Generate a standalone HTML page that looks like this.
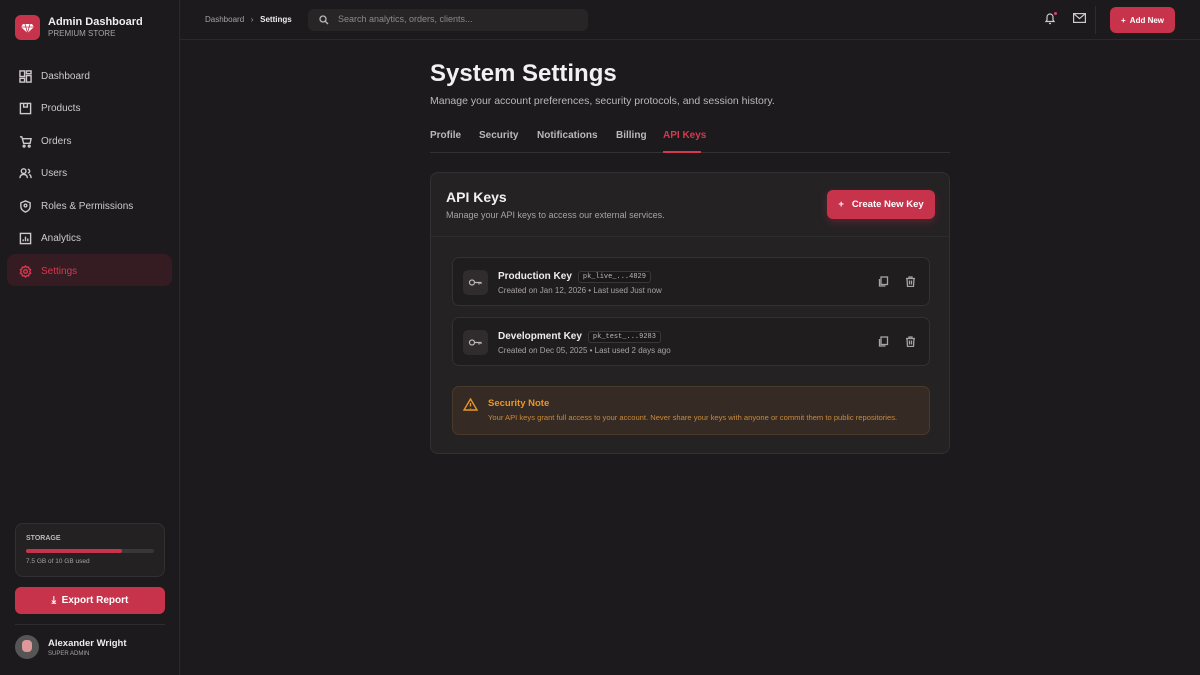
<!DOCTYPE html>
<html><head><meta charset="utf-8"><style>
*{box-sizing:border-box;margin:0;padding:0}
body{width:1200px;height:675px;background:#1c1a1c;font-family:"Liberation Sans",sans-serif;color:#e8e4e6;position:relative;overflow:hidden}
.sb{position:absolute;left:0;top:0;width:180px;height:675px;border-right:1px solid #2c292b;background:#1c1a1c}
.logo{position:absolute;left:15px;top:15px;width:25px;height:25px;border-radius:6px;background:#c8334c}
.nav{position:absolute;left:7px;width:165px;height:32px;display:flex;align-items:center;padding-left:12px;padding-top:2px;font-size:10px;color:#cfc9cc;border-radius:8px}
.nav svg{width:13px;height:13px;margin-right:9px;stroke:#cfc9cc;fill:none;stroke-width:1.5}
.nav.act{background:#351c23;color:#d7384f}
.nav.act svg{stroke:#d7384f}
.top{position:absolute;left:180px;top:0;right:0;height:40px;border-bottom:1px solid #2c292b}
.btn{background:#c8334c;color:#fff;border-radius:6px;font-weight:bold;display:flex;align-items:center;justify-content:center}
.tabs span{position:absolute;top:130px;font-size:10px;font-weight:bold;color:#bdb7ba}
.card{position:absolute;left:430px;top:172px;width:520px;height:282px;background:#252224;border:1px solid #333032;border-radius:8px}
.key{position:absolute;left:21px;width:478px;height:49px;border:1px solid #343133;border-radius:7px;background:#201d1f}
.ki{position:absolute;left:10px;top:12px;width:25px;height:25px;background:#302c2e;border-radius:5px}
.kn{position:absolute;left:45px;top:13px;font-size:10px;font-weight:bold;color:#f0ecee}
.code{display:inline-block;margin-left:6px;font-family:"Liberation Mono",monospace;font-size:7px;font-weight:normal;color:#bdb7ba;border:1px solid #3a3739;background:#1a1819;padding:1px 4px;border-radius:3px;vertical-align:1px}
.kd{position:absolute;left:45px;top:28px;font-size:8px;color:#a8a2a5}
.ic{position:absolute;top:18px;width:11px;height:11px;stroke:#a8a2a5;fill:none;stroke-width:1.3}
</style></head><body>
<div class="sb">
<div class="logo"><svg width="25" height="25" viewBox="0 0 25 25"><path d="M8 9h9l2 3-6.5 6L6 12z" fill="#fff"/><path d="M6 12h13M10 9l2.5 9M15 9l-2.5 9" stroke="#c8334c" stroke-width=".8"/></svg></div>
<div style="position:absolute;left:48px;top:16px;font-size:11px;font-weight:bold;color:#f2eef0">Admin Dashboard</div>
<div style="position:absolute;left:48px;top:29px;font-size:8px;color:#a8a2a5">PREMIUM STORE</div>
<div class="nav" style="top:59px"><svg viewBox="0 0 14 14"><rect x="1" y="1" width="5" height="6"/><rect x="8" y="1" width="5" height="3"/><rect x="1" y="9" width="5" height="4"/><rect x="8" y="6" width="5" height="7"/></svg>Dashboard</div>
<div class="nav" style="top:91px"><svg viewBox="0 0 14 14"><rect x="1.5" y="1.5" width="11" height="11"/><path d="M5 1.5v4h4v-4"/></svg>Products</div>
<div class="nav" style="top:124px"><svg viewBox="0 0 14 14"><path d="M1 2h2l2 7h7l1-5H4"/><circle cx="5.5" cy="12" r="1"/><circle cx="11" cy="12" r="1"/></svg>Orders</div>
<div class="nav" style="top:156px"><svg viewBox="0 0 14 14"><circle cx="5" cy="4.5" r="2.5"/><path d="M1 12c0-3 2-4 4-4s4 1 4 4M9.5 2.5a2 2 0 010 4M11 8c1.5.5 2 2 2 4"/></svg>Users</div>
<div class="nav" style="top:189px"><svg viewBox="0 0 14 14"><path d="M7 1l5 2v4c0 3-2.5 5-5 6-2.5-1-5-3-5-6V3z"/><circle cx="7" cy="6" r="1.5"/></svg>Roles &amp; Permissions</div>
<div class="nav" style="top:221px"><svg viewBox="0 0 14 14"><rect x="1.5" y="1.5" width="11" height="11"/><path d="M4.5 10V8M7 10V5M9.5 10V7"/></svg>Analytics</div>
<div class="nav act" style="top:254px"><svg viewBox="0 0 14 14"><circle cx="7" cy="7" r="2"/><path d="M7 1l1.3 1.6 2-.4.4 2L12.5 5l-.9 2 .9 2-1.8.8-.4 2-2-.4L7 13l-1.3-1.6-2 .4-.4-2L1.5 9l.9-2-.9-2 1.8-.8.4-2 2 .4z"/></svg>Settings</div>
<div style="position:absolute;left:15px;top:523px;width:150px;height:54px;border:1px solid #333032;border-radius:8px;background:#242123">
<div style="position:absolute;left:10px;top:11px;font-size:7px;font-weight:bold;color:#bdb7ba">STORAGE</div>
<div style="position:absolute;left:10px;top:25px;width:128px;height:4px;background:#3a3638;border-radius:2px"><div style="width:96px;height:4px;background:#c8334c;border-radius:2px"></div></div>
<div style="position:absolute;left:10px;top:34px;font-size:6.5px;color:#a8a2a5">7.5 GB of 10 GB used</div></div>
<div class="btn" style="position:absolute;left:15px;top:587px;width:150px;height:27px;font-size:10px">⤓&nbsp; Export Report</div>
<div style="position:absolute;left:15px;top:624px;width:150px;border-top:1px solid #2f2c2e"></div>
<div style="position:absolute;left:15px;top:635px;width:24px;height:24px;border-radius:50%;background:#555;overflow:hidden"><div style="margin:5px auto 0;width:10px;height:12px;background:#d99;border-radius:4px"></div></div>
<div style="position:absolute;left:48px;top:638px;font-size:9.5px;font-weight:bold;color:#f0ecee">Alexander Wright</div>
<div style="position:absolute;left:48px;top:651px;font-size:6px;color:#a8a2a5">SUPER ADMIN</div>
</div>
<div class="top">
<div style="position:absolute;left:25px;top:15px;font-size:8px;color:#a8a2a5">Dashboard &nbsp;&nbsp;›&nbsp;&nbsp; <b style="color:#f0ecee">Settings</b></div>
<div style="position:absolute;left:128px;top:9px;width:280px;height:22px;background:#282527;border-radius:6px;font-size:9px;color:#8e888b;padding:5px 0 0 30px">Search analytics, orders, clients...
<svg style="position:absolute;left:11px;top:6px" width="10" height="10" viewBox="0 0 10 10" fill="none" stroke="#bdb7ba" stroke-width="1.3"><circle cx="4" cy="4" r="3"/><path d="M6.5 6.5L9 9"/></svg></div>
<svg style="position:absolute;left:864px;top:12px" width="12" height="13" viewBox="0 0 12 13" fill="none" stroke="#cfc9cc" stroke-width="1.2"><path d="M2 9.5h8L9 8V5a3 3 0 00-6 0v3zM5 11.5h2"/></svg>
<div style="position:absolute;left:874px;top:12px;width:3px;height:3px;border-radius:50%;background:#e04060"></div>
<svg style="position:absolute;left:893px;top:13px" width="13" height="10" viewBox="0 0 13 10" fill="none" stroke="#cfc9cc" stroke-width="1.2"><rect x=".6" y=".6" width="11.8" height="8.8"/><path d="M.6 .6l5.9 5 5.9-5"/></svg>
<div style="position:absolute;left:915px;top:6px;height:28px;border-left:1px solid #2f2c2e"></div>
<div class="btn" style="position:absolute;left:930px;top:7px;width:65px;height:26px;font-size:8px">+&nbsp; Add New</div>
</div>
<div style="position:absolute;left:430px;top:60px;font-size:24px;font-weight:bold;color:#f4f0f2">System Settings</div>
<div style="position:absolute;left:430px;top:95px;font-size:10.5px;color:#bdb7ba">Manage your account preferences, security protocols, and session history.</div>
<div class="tabs"><span style="left:430px">Profile</span><span style="left:479px">Security</span><span style="left:537px">Notifications</span><span style="left:616px">Billing</span><span style="left:663px;color:#d7384f">API Keys</span></div>
<div style="position:absolute;left:430px;top:152px;width:520px;border-top:1px solid #333032"></div>
<div style="position:absolute;left:663px;top:151px;width:38px;border-top:2px solid #d7384f"></div>
<div class="card">
<div style="position:absolute;left:15px;top:16px;font-size:14px;font-weight:bold;color:#f4f0f2">API Keys</div>
<div style="position:absolute;left:15px;top:37px;font-size:9px;color:#a8a2a5">Manage your API keys to access our external services.</div>
<div class="btn" style="position:absolute;left:396px;top:17px;width:108px;height:29px;font-size:9.5px;box-shadow:0 3px 8px rgba(200,51,76,.3)">+&nbsp;&nbsp; Create New Key</div>
<div style="position:absolute;left:0;top:63px;width:518px;border-top:1px solid #2f2c2e"></div>
<div class="key" style="top:84px"><div class="ki"><svg width="25" height="25" viewBox="0 0 25 25" fill="none" stroke="#bdb7ba" stroke-width="1.2"><circle cx="9" cy="12.5" r="2.5"/><path d="M11.5 12.5h7M16 12.5v2M18 12.5v1.5"/></svg></div><div class="kn">Production Key<span class="code">pk_live_...4829</span></div><div class="kd">Created on Jan 12, 2026 • Last used Just now</div>
<svg class="ic" style="left:425px" viewBox="0 0 11 11"><rect x="3" y="1" width="6.5" height="7.5"/><path d="M1.5 3v7h6"/></svg><svg class="ic" style="left:452px" viewBox="0 0 11 11"><path d="M1 2.5h9M4 2.5V1h3v1.5M2 2.5l.5 8h6l.5-8M4.5 4.5v4M6.5 4.5v4"/></svg></div>
<div class="key" style="top:144px"><div class="ki"><svg width="25" height="25" viewBox="0 0 25 25" fill="none" stroke="#bdb7ba" stroke-width="1.2"><circle cx="9" cy="12.5" r="2.5"/><path d="M11.5 12.5h7M16 12.5v2M18 12.5v1.5"/></svg></div><div class="kn">Development Key<span class="code">pk_test_...9283</span></div><div class="kd">Created on Dec 05, 2025 • Last used 2 days ago</div>
<svg class="ic" style="left:425px" viewBox="0 0 11 11"><rect x="3" y="1" width="6.5" height="7.5"/><path d="M1.5 3v7h6"/></svg><svg class="ic" style="left:452px" viewBox="0 0 11 11"><path d="M1 2.5h9M4 2.5V1h3v1.5M2 2.5l.5 8h6l.5-8M4.5 4.5v4M6.5 4.5v4"/></svg></div>
<div style="position:absolute;left:21px;top:213px;width:478px;height:49px;border:1px solid #4a3a2c;border-radius:7px;background:#352a24">
<svg style="position:absolute;left:10px;top:11px" width="15" height="13" viewBox="0 0 15 13" fill="none" stroke="#e8962a" stroke-width="1.4"><path d="M7.5 1L14 12H1z"/><path d="M7.5 5v3.5M7.5 10v.5"/></svg>
<div style="position:absolute;left:35px;top:11px;font-size:9.5px;font-weight:bold;color:#e8962a">Security Note</div>
<div style="position:absolute;left:35px;top:26px;font-size:7.6px;color:#c98a3a">Your API keys grant full access to your account. Never share your keys with anyone or commit them to public repositories.</div>
</div>
</div>
</body></html>
